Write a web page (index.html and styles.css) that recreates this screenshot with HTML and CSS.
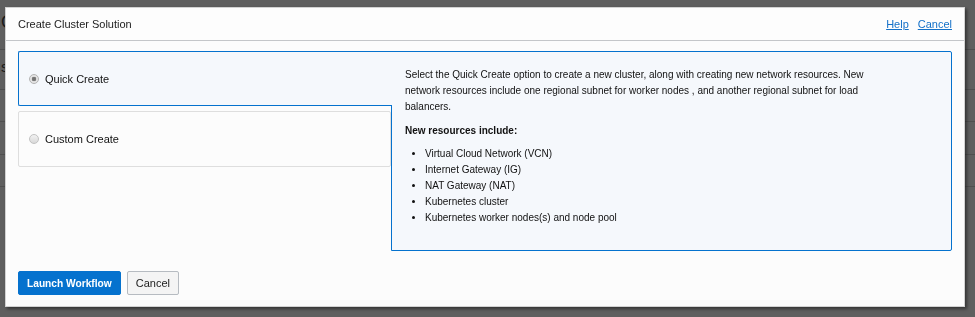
FILE: index.html
```html
<!DOCTYPE html>
<html lang="en">
<head>
  <meta charset="UTF-8" />
  <title>Create Cluster Solution</title>
  <link rel="stylesheet" href="styles.css">
</head>
<body>

  <!-- page behind the dialog, dimmed -->
  <div class="page">
    <div class="page-head"><span class="page-title">O</span></div>
    <div class="page-row row-1"><span class="row-text">s</span></div>
    <div class="page-row row-2"></div>
    <div class="page-row row-3"></div>
    <div class="page-row row-4"></div>
  </div>

  <div class="overlay">
    <div class="dialog">
      <div class="dialog-header">
        <h2>Create Cluster Solution</h2>
        <div class="header-links">
          <a href="#">Help</a>
          <a href="#">Cancel</a>
        </div>
      </div>

      <div class="dialog-body">
        <div class="options">
          <label class="option selected">
            <span class="radio checked"></span>Quick Create
          </label>
          <label class="option">
            <span class="radio"></span>Custom Create
          </label>
        </div>

        <div class="details">
          <p>Select the Quick Create option to create a new cluster, along with creating new network resources. New network resources include one regional subnet for worker nodes , and another regional subnet for load balancers.</p>
          <h4>New resources include:</h4>
          <ul>
            <li>Virtual Cloud Network (VCN)</li>
            <li>Internet Gateway (IG)</li>
            <li>NAT Gateway (NAT)</li>
            <li>Kubernetes cluster</li>
            <li>Kubernetes worker nodes(s) and node pool</li>
          </ul>
        </div>
      </div>

      <div class="dialog-footer">
        <button class="btn primary">Launch Workflow</button>
        <button class="btn secondary">Cancel</button>
      </div>
    </div>
  </div>

</body>
</html>
```

FILE: styles.css
```css
body {
  margin: 0;
  background: #5f5f5f;
  font-family: "Liberation Sans", Arial, sans-serif;
  color: #222;
  overflow: hidden;
}

/* dimmed page */
.page-head {
  height: 50px;
  box-sizing: border-box;
  padding: 12px 0 0 1px;
  border-bottom: 1px solid #4f4f4f;
}

.page-title {
  font-size: 18px;
  color: #1a1a1a;
}

.page-row {
  box-sizing: border-box;
  padding-left: 1px;
  border-bottom: 1px solid #4f4f4f;
}

.row-1 { height: 40px; padding-top: 8px; }
.row-2 { height: 32px; }
.row-3 { height: 33px; }
.row-4 { height: 32px; }

.row-text {
  font-size: 15px;
  color: #1a1a1a;
}

/* dialog */
.overlay {
  position: fixed;
  top: 7px;
  left: 5px;
}

.dialog {
  width: 960px;
  height: 300px;
  box-sizing: border-box;
  background: #fcfcfc;
  border: 1px solid #d2d2d2;
  box-shadow: 2px 2px 3px rgba(0,0,0,0.45);
}

.dialog-header {
  height: 32px;
  display: flex;
  align-items: center;
  justify-content: space-between;
  padding: 0 12px;
  border-bottom: 1px solid #c4c6c9;
  background: #fdfdfd;
}

.dialog-header h2 {
  margin: 0;
  font-size: 11px;
  font-weight: normal;
  color: #222;
}

.header-links {
  display: flex;
  gap: 9px;
}

.header-links a {
  font-size: 11px;
  color: #1370c8;
}

.dialog-body {
  display: grid;
  grid-template-columns: 373px 1fr;
  padding: 10px 12px 0;
}

.options {
  display: flex;
  flex-direction: column;
  gap: 5px;
}

.option {
  display: flex;
  align-items: center;
  height: 55px;
  box-sizing: border-box;
  padding-left: 10px;
  font-size: 11px;
  color: #111;
  background: #fcfcfc;
  border: 1px solid #dedede;
  border-radius: 2px;
}

.option + .option { height: 56px; }

.option.selected {
  position: relative;
  z-index: 1;
  width: 374px;
  background: #f5f8fc;
  border-color: #0572ce;
  border-right: none;
  border-radius: 2px 0 0 2px;
}

.radio {
  width: 10px;
  height: 10px;
  box-sizing: border-box;
  margin-right: 6px;
  border-radius: 50%;
  border: 1px solid #c2c2c2;
  background: linear-gradient(#f2f2f2, #d9d9d9);
}

.radio.checked {
  border-color: #b4b4b4;
  background: radial-gradient(circle, #6e6e6e 0, #7c7c7c 2px, #e4e4e4 2.6px);
}

.details {
  height: 200px;
  box-sizing: border-box;
  padding: 15px 60px 0 13px;
  background: #f5f8fc;
  border: 1px solid #0572ce;
  border-radius: 0 2px 2px 0;
  font-size: 10px;
  line-height: 16px;
  color: #111;
}

.details p {
  margin: 0;
}

.details h4 {
  margin: 8px 0 0;
  font-size: 10px;
}

.details ul {
  margin: 7px 0 0;
  padding-left: 20px;
}

.dialog-footer {
  display: flex;
  gap: 6px;
  padding: 20px 12px 0;
}

.btn {
  height: 24px;
  box-sizing: border-box;
  border-radius: 2px;
  font-family: "Liberation Sans", Arial, sans-serif;
  cursor: pointer;
}

.primary {
  padding: 0 8px;
  border: 1px solid #0572ce;
  background: #0572ce;
  color: white;
  font-weight: bold;
  font-size: 10.2px;
}

.secondary {
  padding: 0 8px;
  border: 1px solid #b6bbc1;
  background: #f4f4f4;
  color: #222;
  font-size: 11px;
}
```
